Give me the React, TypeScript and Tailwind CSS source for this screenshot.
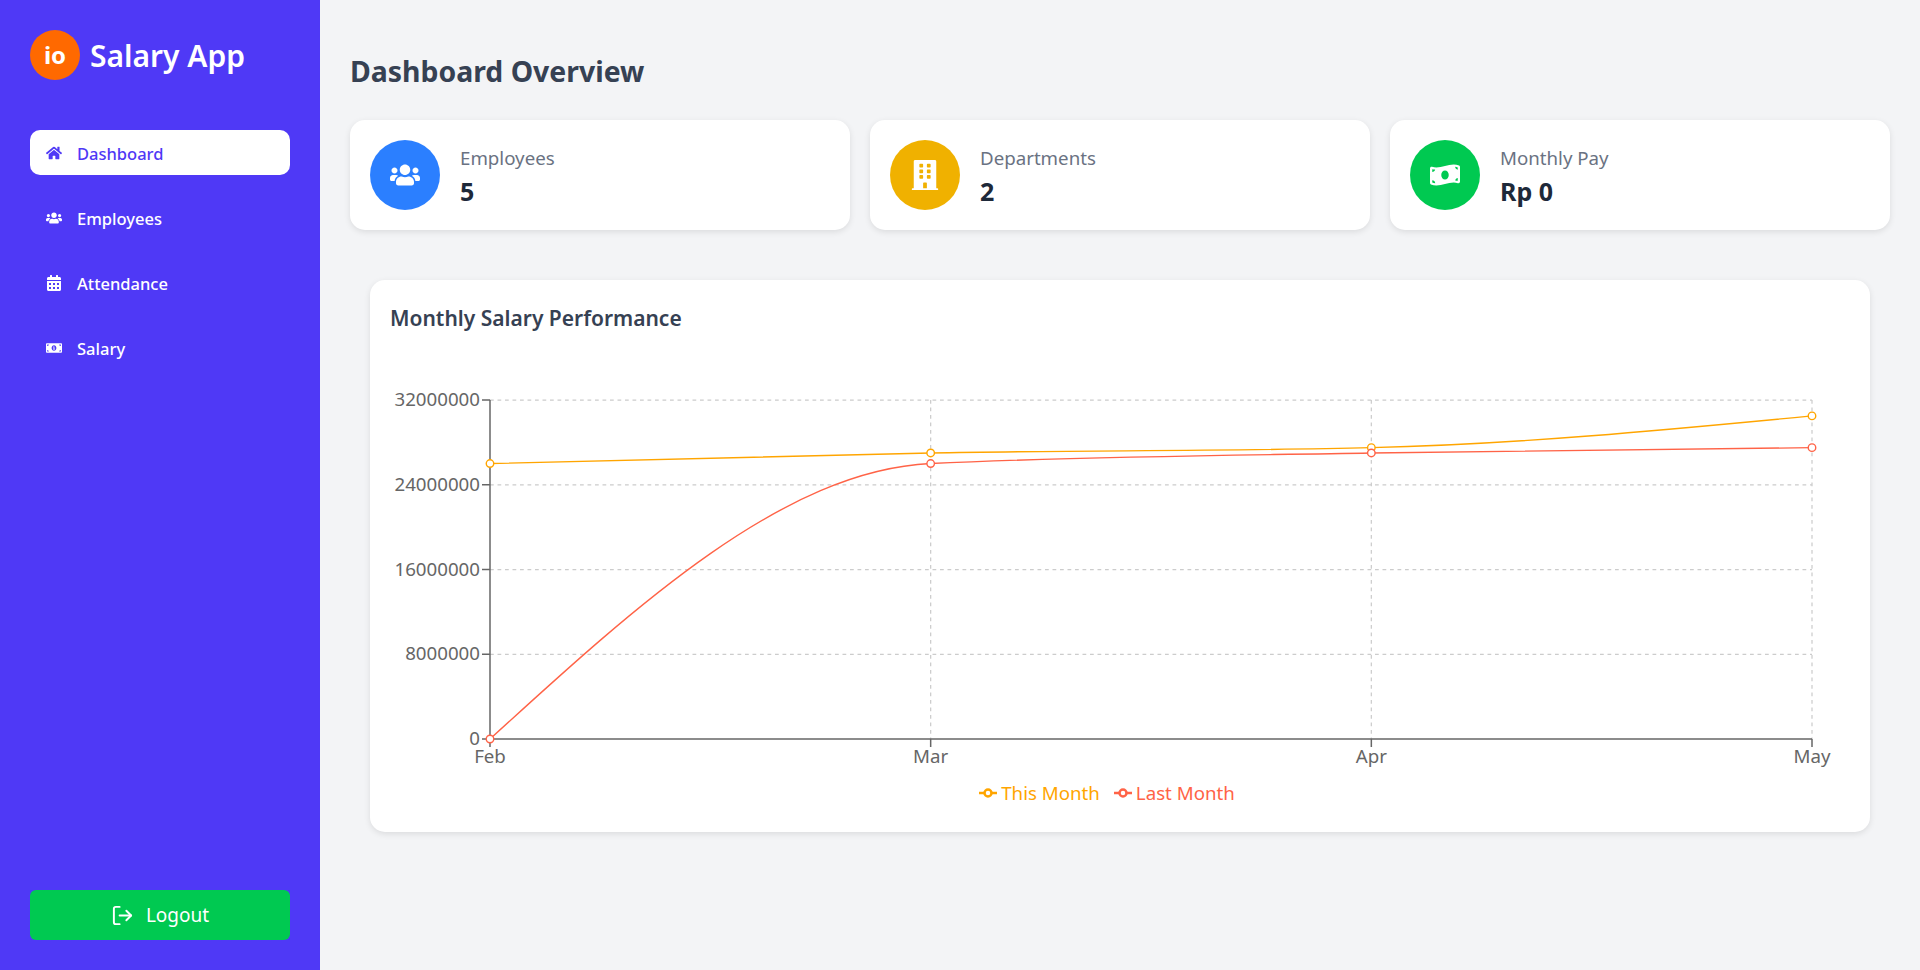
import type { ReactNode } from 'react'
import { FaBuilding, FaCalendarAlt, FaHome, FaMoneyBillAlt, FaMoneyBillWave, FaUsers } from 'react-icons/fa'
import { FiLogOut } from 'react-icons/fi'

const months = ['Feb', 'Mar', 'Apr', 'May']
const thisMonth = [26000000, 27000000, 27500000, 30500000]
const lastMonth = [0, 26000000, 27000000, 27500000]
const ticks = [0, 8000000, 16000000, 24000000, 32000000]

// plot area inside the svg
const left = 100
const right = 1422
const top = 20
const bottom = 359
const xAt = (i: number) => left + (i * (right - left)) / 3
const yAt = (v: number) => bottom - (v / 32000000) * (bottom - top)

// same curve recharts draws for type="monotone"
function monotonePath(values: number[]) {
  const pts = values.map((v, i) => [xAt(i), yAt(v)])
  const n = pts.length
  const slopes: number[] = []
  for (let i = 0; i < n - 1; i++) {
    slopes.push((pts[i + 1][1] - pts[i][1]) / (pts[i + 1][0] - pts[i][0]))
  }
  const m: number[] = new Array(n).fill(0)
  for (let i = 1; i < n - 1; i++) {
    const s0 = slopes[i - 1]
    const s1 = slopes[i]
    const p = (s0 + s1) / 2
    m[i] = (Math.sign(s0) + Math.sign(s1)) * Math.min(Math.abs(s0), Math.abs(s1), 0.5 * Math.abs(p)) || 0
  }
  m[0] = (3 * slopes[0] - m[1]) / 2
  m[n - 1] = (3 * slopes[n - 2] - m[n - 2]) / 2
  let d = `M${pts[0][0]},${pts[0][1]}`
  for (let i = 0; i < n - 1; i++) {
    const dx = (pts[i + 1][0] - pts[i][0]) / 3
    d += `C${pts[i][0] + dx},${pts[i][1] + dx * m[i]} ${pts[i + 1][0] - dx},${pts[i + 1][1] - dx * m[i + 1]} ${pts[i + 1][0]},${pts[i + 1][1]}`
  }
  return d
}

function NavItem({ icon, label, active }: { icon: ReactNode; label: string; active?: boolean }) {
  return (
    <a
      className={
        active
          ? 'flex items-center h-[45px] px-[15px] gap-[14px] rounded-[10px] bg-white text-indigo-600 font-medium'
          : 'flex items-center h-[45px] px-[15px] gap-[14px] rounded-[10px] text-white font-medium'
      }
    >
      <span className="w-[18px] flex justify-center text-[16px]">{icon}</span>
      <span className="text-[16.5px] leading-[24px] pt-[2px]">{label}</span>
    </a>
  )
}

function StatCard({ icon, color, label, value }: { icon: ReactNode; color: string; label: string; value: string }) {
  return (
    <div className="flex-1 flex items-center gap-5 h-[110px] p-5 bg-white rounded-[15px] shadow-[0_2px_6px_rgba(0,0,0,0.1)]">
      <div className={`w-[70px] h-[70px] rounded-full flex items-center justify-center text-white text-[30px] ${color}`}>
        {icon}
      </div>
      <div>
        <p className="text-[18.7px] leading-[28px] mb-[3px] text-gray-500">{label}</p>
        <p className="text-[25px] leading-[32px] font-bold text-gray-800">{value}</p>
      </div>
    </div>
  )
}

function LegendItem({ color, label }: { color: string; label: string }) {
  return (
    <span className="inline-flex items-center gap-1" style={{ color }}>
      <svg width="18" height="14" viewBox="0 0 18 14">
        <line x1="0" y1="7" x2="18" y2="7" stroke={color} strokeWidth="2.5" />
        <circle cx="9" cy="7" r="3.5" fill="white" stroke={color} strokeWidth="2.5" />
      </svg>
      {label}
    </span>
  )
}

function SalaryChart() {
  return (
    <svg width="1460" height="420" viewBox="0 0 1460 420" className="block">
      {ticks.slice(1).map((t) => (
        <line key={t} x1={left} x2={right} y1={yAt(t)} y2={yAt(t)} stroke="#ccc" strokeDasharray="3.75 3.75" strokeWidth="1.25" />
      ))}
      {months.slice(1).map((m, i) => (
        <line key={m} x1={xAt(i + 1)} x2={xAt(i + 1)} y1={top} y2={bottom} stroke="#ccc" strokeDasharray="3.75 3.75" strokeWidth="1.25" />
      ))}
      <line x1={left} x2={left} y1={top} y2={bottom} stroke="#666" strokeWidth="1.5" />
      <line x1={left} x2={right} y1={bottom} y2={bottom} stroke="#666" strokeWidth="1.5" />
      {ticks.map((t) => (
        <g key={t}>
          <line x1={left - 8} x2={left} y1={yAt(t)} y2={yAt(t)} stroke="#666" strokeWidth="1.5" />
          <text x={left - 10} y={yAt(t) + 6} textAnchor="end" fontSize="18.7" fill="#666">
            {t}
          </text>
        </g>
      ))}
      {months.map((m, i) => (
        <g key={m}>
          <line x1={xAt(i)} x2={xAt(i)} y1={bottom} y2={bottom + 8} stroke="#666" strokeWidth="1.5" />
          <text x={xAt(i)} y={bottom + 24} textAnchor="middle" fontSize="18.7" fill="#666">
            {m}
          </text>
        </g>
      ))}
      <path d={monotonePath(thisMonth)} fill="none" stroke="#ffa500" strokeWidth="1.4" />
      <path d={monotonePath(lastMonth)} fill="none" stroke="#ff6347" strokeWidth="1.4" />
      {thisMonth.map((v, i) => (
        <circle key={i} cx={xAt(i)} cy={yAt(v)} r="3.75" fill="#fff" stroke="#ffa500" strokeWidth="1.4" />
      ))}
      {lastMonth.map((v, i) => (
        <circle key={i} cx={xAt(i)} cy={yAt(v)} r="3.75" fill="#fff" stroke="#ff6347" strokeWidth="1.4" />
      ))}
    </svg>
  )
}

export default function App() {
  return (
    <div className="flex h-[970px] bg-gray-100 font-['Noto_Sans','Open_Sans',sans-serif] overflow-hidden">
      <aside className="w-[320px] shrink-0 bg-indigo-600 p-[30px] flex flex-col">
        <div className="flex items-center gap-[10px] h-[50px] mb-[50px]">
          <div className="w-[50px] h-[50px] rounded-full bg-orange-500 flex items-center justify-center text-white text-[24px] font-bold">
            io
          </div>
          <span className="text-white text-[30px] leading-[40px] pt-[2px] font-semibold">Salary App</span>
        </div>
        <nav className="flex flex-col gap-5">
          <NavItem active icon={<FaHome />} label="Dashboard" />
          <NavItem icon={<FaUsers />} label="Employees" />
          <NavItem icon={<FaCalendarAlt />} label="Attendance" />
          <NavItem icon={<FaMoneyBillAlt />} label="Salary" />
        </nav>
        <button className="mt-auto h-[50px] pt-[1px] rounded-md bg-green-500 text-white text-[19px] flex items-center justify-center gap-[12px]">
          <FiLogOut className="text-[23px]" />
          Logout
        </button>
      </aside>
      <main className="flex-1 p-[30px]">
        <h1 className="text-[28.4px] leading-[36px] font-bold text-gray-700 mt-[23px] mb-[31px]">Dashboard Overview</h1>
        <div className="flex gap-5">
          <StatCard icon={<FaUsers />} color="bg-blue-500" label="Employees" value="5" />
          <StatCard icon={<FaBuilding />} color="bg-yellow-500" label="Departments" value="2" />
          <StatCard icon={<FaMoneyBillWave />} color="bg-green-500" label="Monthly Pay" value="Rp 0" />
        </div>
        <section className="mx-5 mt-[50px] h-[552px] bg-white rounded-[15px] shadow-[0_2px_6px_rgba(0,0,0,0.1)] p-5">
          <h2 className="text-[21px] leading-[36px] font-semibold text-gray-700 mb-[44px]">Monthly Salary Performance</h2>
          <SalaryChart />
          <div className="w-[1434px] flex justify-center gap-[14px] text-[18.7px] -mt-[21px]">
            <LegendItem color="#ffa500" label="This Month" />
            <LegendItem color="#ff6347" label="Last Month" />
          </div>
        </section>
      </main>
    </div>
  )
}
